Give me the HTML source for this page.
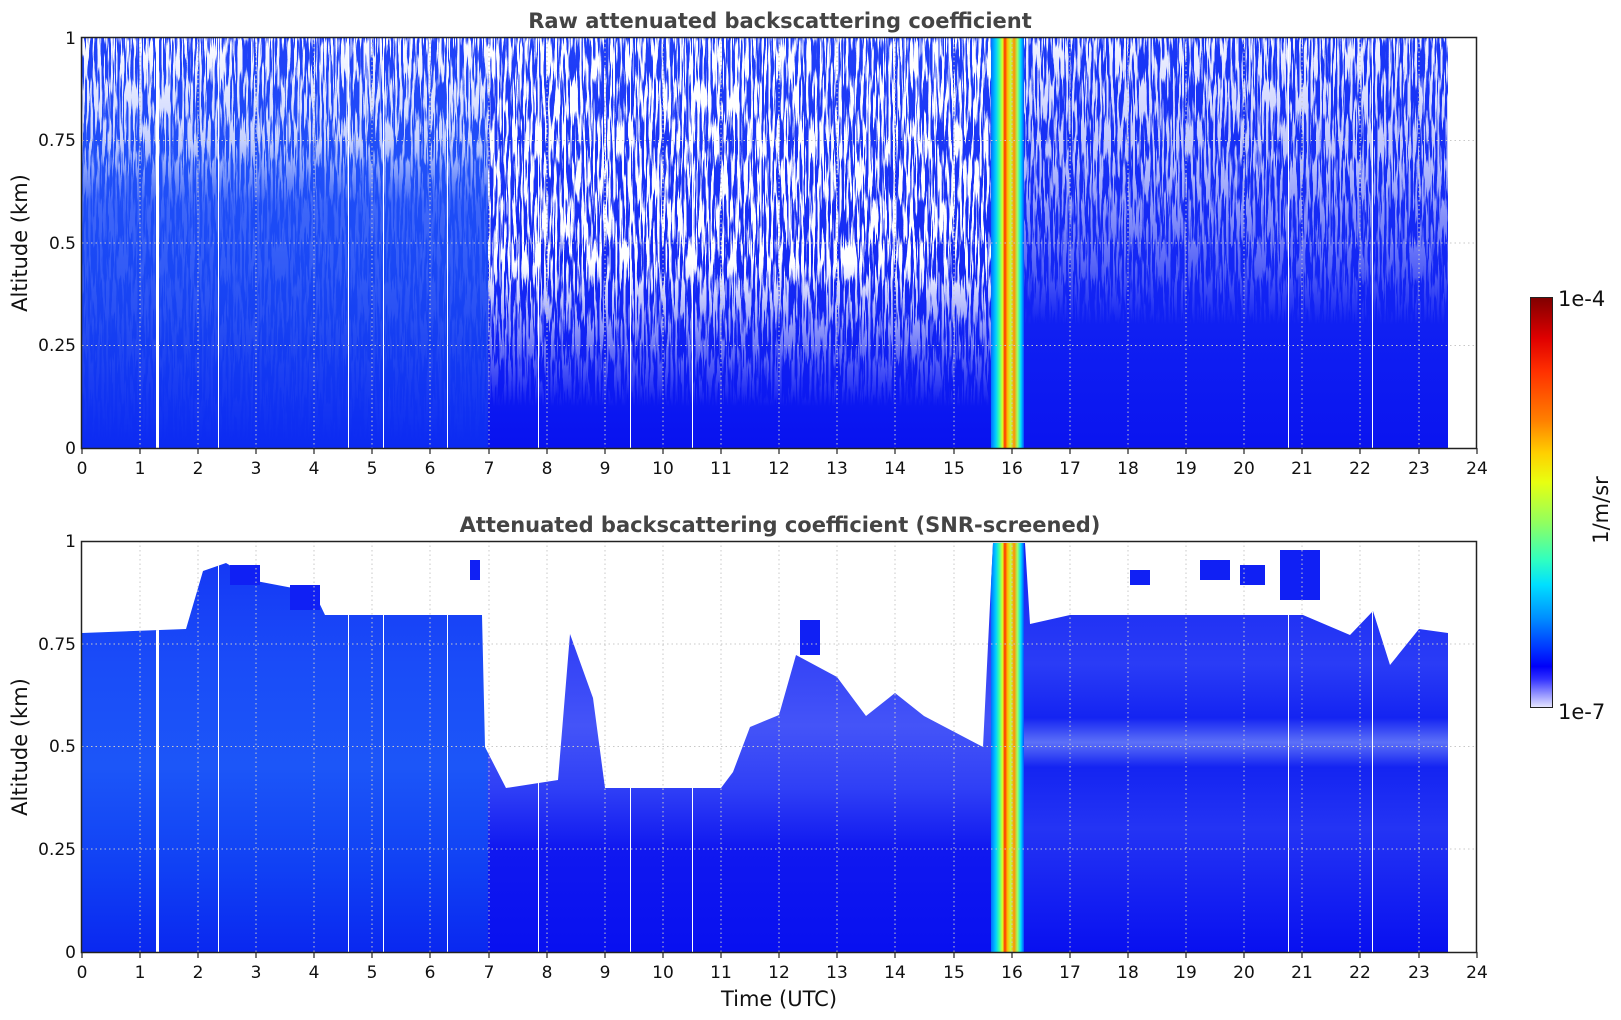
<!DOCTYPE html>
<html><head><meta charset="utf-8"><style>
html,body{margin:0;padding:0;background:#fff;}
svg{display:block;font-family:"DejaVu Sans","Liberation Sans",sans-serif;}
</style></head><body>
<svg width="1621" height="1020" viewBox="0 0 1621 1020" xmlns="http://www.w3.org/2000/svg">
<defs>
<filter id="nz" x="0" y="0" width="1" height="1">
<feTurbulence type="fractalNoise" baseFrequency="0.45 0.025" numOctaves="2" seed="5"/>
<feColorMatrix type="matrix" values="0 0 0 0 1  0 0 0 0 1  0 0 0 0 1  14 0 0 0 -6.6"/>
</filter>
<linearGradient id="mL" x1="0" y1="0" x2="0" y2="1">
<stop offset="0" stop-color="#fff" stop-opacity="1"/><stop offset="0.25" stop-color="#fff" stop-opacity="0.75"/><stop offset="0.4" stop-color="#fff" stop-opacity="0.15"/><stop offset="1" stop-color="#fff" stop-opacity="0"/>
</linearGradient>
<linearGradient id="mM" x1="0" y1="0" x2="0" y2="1">
<stop offset="0" stop-color="#fff" stop-opacity="1"/><stop offset="0.55" stop-color="#fff" stop-opacity="1"/><stop offset="0.75" stop-color="#fff" stop-opacity="0.4"/><stop offset="0.9" stop-color="#fff" stop-opacity="0"/>
</linearGradient>
<linearGradient id="mR" x1="0" y1="0" x2="0" y2="1">
<stop offset="0" stop-color="#fff" stop-opacity="0.95"/><stop offset="0.3" stop-color="#fff" stop-opacity="0.7"/><stop offset="0.55" stop-color="#fff" stop-opacity="0.3"/><stop offset="0.7" stop-color="#fff" stop-opacity="0"/>
</linearGradient>
<mask id="tmask" maskUnits="userSpaceOnUse" x="0" y="0" width="1621" height="1020">
<rect x="82" y="38" width="406" height="410" fill="url(#mL)"/>
<rect x="488" y="38" width="503" height="410" fill="url(#mM)"/>
<rect x="1024" y="38" width="424" height="410" fill="url(#mR)"/>
</mask>
<linearGradient id="tL" x1="0" y1="0" x2="0" y2="1">
<stop offset="0" stop-color="#2040f8"/><stop offset="0.3" stop-color="#2050f8"/><stop offset="0.55" stop-color="#1a48f5"/><stop offset="0.7" stop-color="#1640f2"/><stop offset="1" stop-color="#0c2af2"/>
</linearGradient>
<linearGradient id="tM" x1="0" y1="0" x2="0" y2="1">
<stop offset="0" stop-color="#2040f8"/><stop offset="0.6" stop-color="#1428f4"/><stop offset="1" stop-color="#0812f0"/>
</linearGradient>
<linearGradient id="tR" x1="0" y1="0" x2="0" y2="1">
<stop offset="0" stop-color="#1a38f6"/><stop offset="0.5" stop-color="#1428f4"/><stop offset="1" stop-color="#0a14f0"/>
</linearGradient>
<linearGradient id="bL" x1="0" y1="0" x2="0" y2="1">
<stop offset="0" stop-color="#1434f4"/><stop offset="0.3" stop-color="#1a4cf8"/><stop offset="0.55" stop-color="#1c56f8"/><stop offset="0.8" stop-color="#1040f4"/><stop offset="1" stop-color="#0a28f0"/>
</linearGradient>
<linearGradient id="bM" x1="0" y1="0" x2="0" y2="1">
<stop offset="0" stop-color="#1a28f4"/><stop offset="0.45" stop-color="#4454f8"/><stop offset="0.6" stop-color="#3040f6"/><stop offset="0.75" stop-color="#1018f0"/><stop offset="1" stop-color="#0810f0"/>
</linearGradient>
<linearGradient id="bR" x1="0" y1="0" x2="0" y2="1">
<stop offset="0" stop-color="#1424f2"/><stop offset="0.3" stop-color="#2a3cf6"/><stop offset="0.43" stop-color="#1424f2"/><stop offset="0.49" stop-color="#5c70f8"/><stop offset="0.55" stop-color="#1424f2"/><stop offset="0.7" stop-color="#2434f4"/><stop offset="1" stop-color="#0810f0"/>
</linearGradient>
<linearGradient id="st" x1="0" y1="0" x2="1" y2="0">
<stop offset="0" stop-color="#0070ff"/><stop offset="0.15" stop-color="#00d0ff"/><stop offset="0.25" stop-color="#40ffa0"/><stop offset="0.35" stop-color="#e0ff20"/><stop offset="0.42" stop-color="#ff3000"/><stop offset="0.5" stop-color="#ffc000"/><stop offset="0.6" stop-color="#c0ff40"/><stop offset="0.7" stop-color="#ff9000"/><stop offset="0.8" stop-color="#a0ff60"/><stop offset="0.9" stop-color="#00e0ff"/><stop offset="1" stop-color="#0050ff"/>
</linearGradient>
<linearGradient id="cb" x1="0" y1="0" x2="0" y2="1">
<stop offset="0" stop-color="#800000"/><stop offset="0.1" stop-color="#e00000"/><stop offset="0.18" stop-color="#ff3000"/><stop offset="0.3" stop-color="#ff8000"/><stop offset="0.38" stop-color="#ffd000"/><stop offset="0.45" stop-color="#e8ff10"/><stop offset="0.55" stop-color="#90ff60"/><stop offset="0.64" stop-color="#30ffc0"/><stop offset="0.7" stop-color="#00e0ff"/><stop offset="0.78" stop-color="#0090ff"/><stop offset="0.86" stop-color="#0030ff"/><stop offset="0.9" stop-color="#0000f8"/><stop offset="0.93" stop-color="#3030ff"/><stop offset="0.96" stop-color="#8080ff"/><stop offset="1" stop-color="#e8e8ff"/>
</linearGradient>
<clipPath id="bclip"><polygon points="
82,633 186,629 203,571 226,563 256,581 314,592 325,615 482,615 485,747 506,788 558,780 570,634 593,698 605,788 721,788 733,772 750,727 779,715 796,655 837,677 866,716 895,693 924,716 983,747 993,543 1025,543 1030,624 1070,615 1128,615 1303,615 1350,635 1373,611 1390,665 1419,629 1448,633 1448,952 82,952"/></clipPath>
</defs>

<text x="780" y="28" text-anchor="middle" font-size="21" font-weight="bold" fill="#444">Raw attenuated backscattering coefficient</text>
<text x="780" y="532" text-anchor="middle" font-size="21" font-weight="bold" fill="#444">Attenuated backscattering coefficient (SNR-screened)</text>

<rect x="82" y="38" width="406" height="410" fill="url(#tL)"/>
<rect x="488" y="38" width="506" height="410" fill="url(#tM)"/>
<rect x="1024" y="38" width="424" height="410" fill="url(#tR)"/>
<g mask="url(#tmask)"><rect x="82" y="38" width="1366" height="410" filter="url(#nz)"/></g>
<rect x="991" y="38" width="33" height="410" fill="url(#st)"/>
<g fill="#fff">
<rect x="156" y="38" width="3" height="410"/><rect x="218" y="38" width="1" height="410"/><rect x="348" y="38" width="1" height="410"/><rect x="383" y="38" width="1" height="410"/><rect x="447" y="38" width="1" height="410"/><rect x="538" y="38" width="1" height="410"/><rect x="630" y="38" width="1" height="410"/><rect x="692" y="38" width="1" height="410"/><rect x="1288" y="38" width="1" height="410"/><rect x="1372" y="38" width="1" height="410"/>
</g>

<g clip-path="url(#bclip)">
<rect x="82" y="541" width="406" height="411" fill="url(#bL)"/>
<rect x="488" y="541" width="506" height="411" fill="url(#bM)"/>
<rect x="1024" y="541" width="424" height="411" fill="url(#bR)"/>
<rect x="991" y="541" width="33" height="411" fill="url(#st)"/>
<g fill="#fff">
<rect x="156" y="541" width="3" height="411"/><rect x="218" y="541" width="1" height="411"/><rect x="348" y="541" width="1" height="411"/><rect x="383" y="541" width="1" height="411"/><rect x="447" y="541" width="1" height="411"/><rect x="538" y="541" width="1" height="411"/><rect x="630" y="541" width="1" height="411"/><rect x="692" y="541" width="1" height="411"/><rect x="1288" y="541" width="1" height="411"/><rect x="1372" y="541" width="1" height="411"/>
</g>
</g>
<g fill="#1020f4">
<rect x="290" y="585" width="30" height="25"/><rect x="230" y="565" width="30" height="20"/><rect x="470" y="560" width="10" height="20"/><rect x="1130" y="570" width="20" height="15"/><rect x="1200" y="560" width="30" height="20"/><rect x="1280" y="550" width="40" height="50"/><rect x="1240" y="565" width="25" height="20"/><rect x="800" y="620" width="20" height="35"/>
</g>

<g stroke="#c8c8c8" stroke-width="1" stroke-dasharray="1.5,3">
<path d="M140 38V448M198 38V448M256 38V448M314 38V448M372 38V448M430 38V448M489 38V448M547 38V448M605 38V448M663 38V448M721 38V448M779 38V448M837 38V448M895 38V448M954 38V448M1012 38V448M1070 38V448M1128 38V448M1186 38V448M1244 38V448M1302 38V448M1360 38V448M1419 38V448"/>
<path d="M82 140.5H1477M82 243H1477M82 345.5H1477"/>
<path d="M140 541V952M198 541V952M256 541V952M314 541V952M372 541V952M430 541V952M489 541V952M547 541V952M605 541V952M663 541V952M721 541V952M779 541V952M837 541V952M895 541V952M954 541V952M1012 541V952M1070 541V952M1128 541V952M1186 541V952M1244 541V952M1302 541V952M1360 541V952M1419 541V952"/>
<path d="M82 644H1477M82 746.5H1477M82 849H1477"/>
</g>

<rect x="81.5" y="37.5" width="1395" height="411" fill="none" stroke="#222" stroke-width="1.5"/>
<rect x="81.5" y="541.5" width="1395" height="411" fill="none" stroke="#222" stroke-width="1.5"/>

<g stroke="#222" stroke-width="1.2">
<path d="M82 448v6M140 448v6M198 448v6M256 448v6M314 448v6M372 448v6M430 448v6M489 448v6M547 448v6M605 448v6M663 448v6M721 448v6M779 448v6M837 448v6M895 448v6M954 448v6M1012 448v6M1070 448v6M1128 448v6M1186 448v6M1244 448v6M1302 448v6M1360 448v6M1419 448v6M1477 448v6"/>
<path d="M82 952v6M140 952v6M198 952v6M256 952v6M314 952v6M372 952v6M430 952v6M489 952v6M547 952v6M605 952v6M663 952v6M721 952v6M779 952v6M837 952v6M895 952v6M954 952v6M1012 952v6M1070 952v6M1128 952v6M1186 952v6M1244 952v6M1302 952v6M1360 952v6M1419 952v6M1477 952v6"/>
</g>

<g font-size="17" fill="#111" text-anchor="middle">
<text x="82" y="474">0</text><text x="140" y="474">1</text><text x="198" y="474">2</text><text x="256" y="474">3</text><text x="314" y="474">4</text><text x="372" y="474">5</text><text x="430" y="474">6</text><text x="489" y="474">7</text><text x="547" y="474">8</text><text x="605" y="474">9</text><text x="663" y="474">10</text><text x="721" y="474">11</text><text x="779" y="474">12</text><text x="837" y="474">13</text><text x="895" y="474">14</text><text x="954" y="474">15</text><text x="1012" y="474">16</text><text x="1070" y="474">17</text><text x="1128" y="474">18</text><text x="1186" y="474">19</text><text x="1244" y="474">20</text><text x="1302" y="474">21</text><text x="1360" y="474">22</text><text x="1419" y="474">23</text><text x="1477" y="474">24</text>
<text x="82" y="978">0</text><text x="140" y="978">1</text><text x="198" y="978">2</text><text x="256" y="978">3</text><text x="314" y="978">4</text><text x="372" y="978">5</text><text x="430" y="978">6</text><text x="489" y="978">7</text><text x="547" y="978">8</text><text x="605" y="978">9</text><text x="663" y="978">10</text><text x="721" y="978">11</text><text x="779" y="978">12</text><text x="837" y="978">13</text><text x="895" y="978">14</text><text x="954" y="978">15</text><text x="1012" y="978">16</text><text x="1070" y="978">17</text><text x="1128" y="978">18</text><text x="1186" y="978">19</text><text x="1244" y="978">20</text><text x="1302" y="978">21</text><text x="1360" y="978">22</text><text x="1419" y="978">23</text><text x="1477" y="978">24</text>
</g>
<g font-size="17" fill="#111" text-anchor="end">
<text x="76" y="44">1</text><text x="76" y="146">0.75</text><text x="76" y="249">0.5</text><text x="76" y="351">0.25</text><text x="76" y="454">0</text>
<text x="76" y="547">1</text><text x="76" y="650">0.75</text><text x="76" y="752">0.5</text><text x="76" y="855">0.25</text><text x="76" y="958">0</text>
</g>

<text transform="translate(27,243) rotate(-90)" text-anchor="middle" font-size="21" fill="#111">Altitude (km)</text>
<text transform="translate(27,747) rotate(-90)" text-anchor="middle" font-size="21" fill="#111">Altitude (km)</text>
<text x="779" y="1006" text-anchor="middle" font-size="21" fill="#111">Time (UTC)</text>

<rect x="1530.5" y="297.5" width="22" height="410" fill="url(#cb)" stroke="#222" stroke-width="1"/>
<text x="1558" y="306" font-size="21" fill="#111">1e-4</text>
<text x="1558" y="719" font-size="21" fill="#111">1e-7</text>
<text transform="translate(1608,510) rotate(-90)" text-anchor="middle" font-size="21" fill="#111">1/m/sr</text>
</svg>
</body></html>
